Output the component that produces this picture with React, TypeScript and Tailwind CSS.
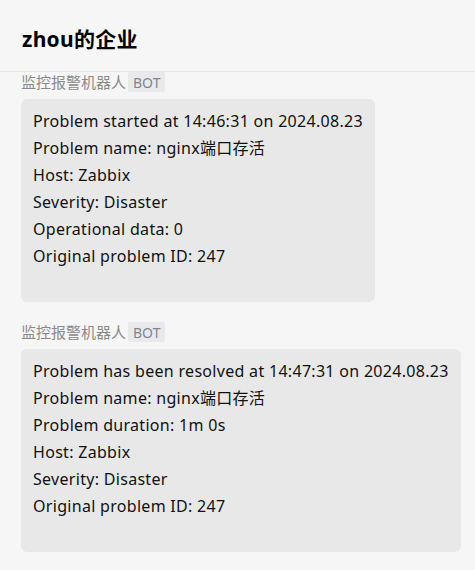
import React from "react";

const font = { fontFamily: '"Noto Sans", "Noto Sans CJK SC", sans-serif' };

function Message({ lines }: { lines: string[] }) {
  return (
    <div className="flex flex-col items-start">
      <div className="flex items-center h-5 text-[15px] text-[#8a8a8a]">
        <span>监控报警机器人</span>
        <span className="ml-[2px] h-5 px-[5px] flex items-center bg-[#e9e9ec] text-[#7f8591] rounded-[2px] text-[14px]">BOT</span>
      </div>
      <div className="mt-[7px] bg-[#e8e8e8] rounded-[6px] pl-3 pr-3 pt-[9px] pb-[32px] text-[16px] leading-[27px] tracking-[0.3px] text-[#111]">
        {lines.map((l, i) => (
          <div key={i} className="whitespace-nowrap">{l}</div>
        ))}
      </div>
    </div>
  );
}

export default function App() {
  return (
    <div className="w-[475px] h-[570px] bg-[#f6f6f6] overflow-hidden" style={font}>
      <div className="h-[72px] border-b border-[#e6e6e6] flex items-center pl-[22px] pt-2">
        <h1 className="text-[21px] tracking-[0.3px] font-bold text-black">zhou的企业</h1>
      </div>
      <div className="pl-[21px] flex flex-col gap-5">
        <Message
          lines={[
            "Problem started at 14:46:31 on 2024.08.23",
            "Problem name: nginx端口存活",
            "Host: Zabbix",
            "Severity: Disaster",
            "Operational data: 0",
            "Original problem ID: 247",
          ]}
        />
        <Message
          lines={[
            "Problem has been resolved at 14:47:31 on 2024.08.23",
            "Problem name: nginx端口存活",
            "Problem duration: 1m 0s",
            "Host: Zabbix",
            "Severity: Disaster",
            "Original problem ID: 247",
          ]}
        />
      </div>
    </div>
  );
}
